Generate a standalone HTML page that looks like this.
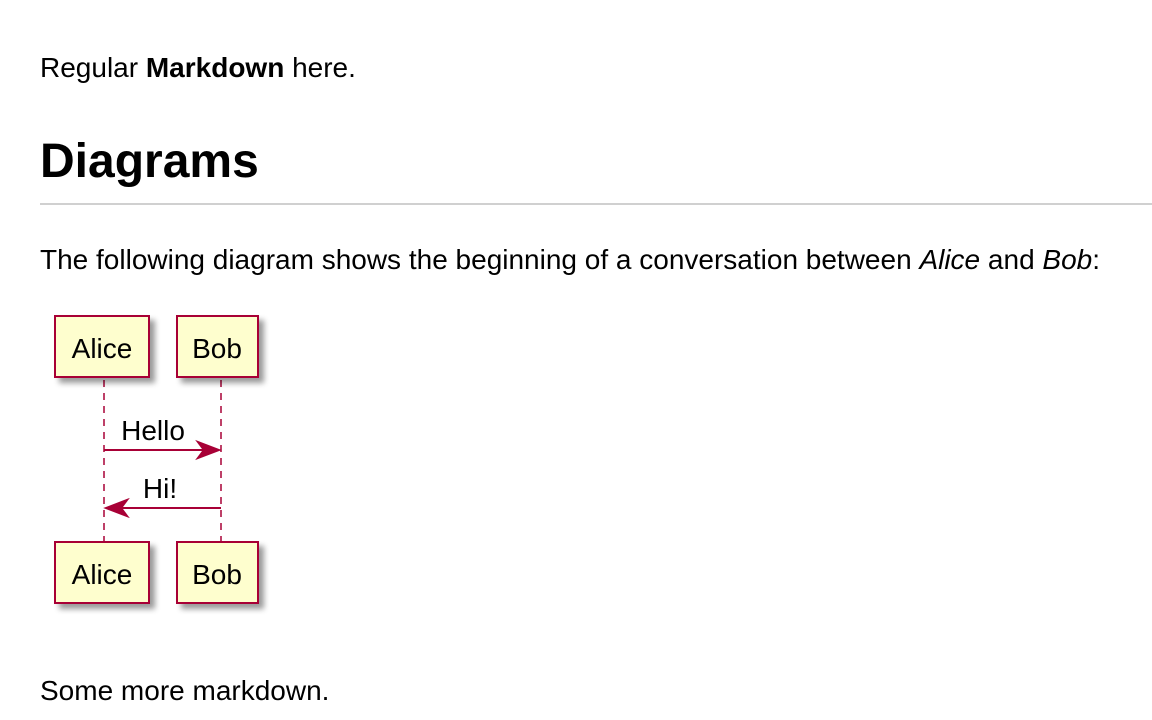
<!DOCTYPE html>
<html><head><style>
body{margin:0;background:#fff;font-family:"Liberation Sans",Arial,sans-serif;color:#000;width:1152px;height:720px;overflow:hidden;position:relative}
.t{position:absolute;left:40px;font-size:28px;white-space:nowrap;line-height:1}
h1{position:absolute;left:40px;top:138px;margin:0;font-size:48px;font-weight:bold;line-height:1}
.hr{position:absolute;left:40px;right:0;top:203px;height:2px;background:#d0d0d0}
svg{position:absolute;left:0;top:0}
</style></head><body>
<div class="t" style="top:54px">Regular <b>Markdown</b> here.</div>
<h1>Diagrams</h1>
<div class="hr"></div>
<div class="t" style="top:246px">The following diagram shows the beginning of a conversation between <i>Alice</i> and <i>Bob</i>:</div>
<svg width="300" height="640" viewBox="0 0 300 640">
<defs><filter id="s" x="-20%" y="-20%" width="150%" height="150%"><feGaussianBlur in="SourceAlpha" stdDeviation="3"/><feOffset dx="5" dy="5"/><feComponentTransfer><feFuncA type="linear" slope="0.4"/></feComponentTransfer><feMerge><feMergeNode/><feMergeNode in="SourceGraphic"/></feMerge></filter></defs>
<g stroke="#A80036" stroke-width="1.5" stroke-dasharray="7,6" fill="none">
<line x1="104" y1="380" x2="104" y2="541"/><line x1="221" y1="380" x2="221" y2="541"/></g>
<g fill="#FEFECE" stroke="#A80036" stroke-width="2" filter="url(#s)">
<rect x="55" y="316" width="94" height="61"/><rect x="177" y="316" width="81" height="61"/>
<rect x="55" y="542" width="94" height="61"/><rect x="177" y="542" width="81" height="61"/></g>
<g font-family="Liberation Sans,Arial,sans-serif" font-size="28" text-anchor="middle" fill="#000">
<text x="102" y="358">Alice</text><text x="217" y="358">Bob</text>
<text x="102" y="584">Alice</text><text x="217" y="584">Bob</text>
<text x="153" y="440">Hello</text><text x="160" y="498">Hi!</text></g>
<g stroke="#A80036" stroke-width="2" fill="#A80036">
<line x1="104" y1="450" x2="215" y2="450"/><path d="M219 450 L198 442 L204 450 L198 458 Z"/>
<line x1="110" y1="508" x2="221" y2="508"/><path d="M106 508 L127 500 L121 508 L127 516 Z"/></g>
</svg>
<div class="t" style="top:677px">Some more markdown.</div>
</body></html>
